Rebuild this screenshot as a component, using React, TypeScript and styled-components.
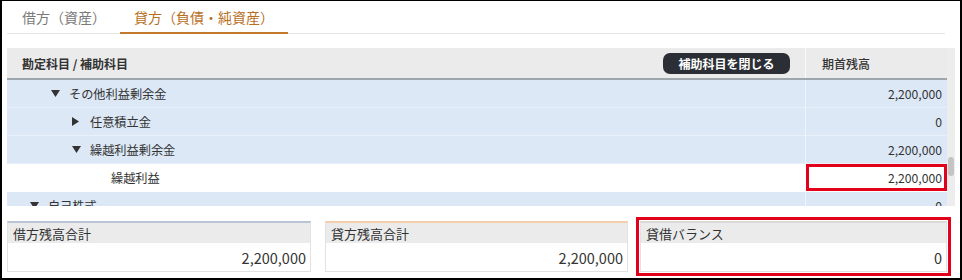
import React from 'react';
import styled, { createGlobalStyle } from 'styled-components';

const GlobalStyle = createGlobalStyle`
  html, body {
    margin: 0;
    padding: 0;
    background: #ffffff;
  }
  body {
    font-family: "Noto Sans CJK JP", "Noto Sans", sans-serif;
    color: #333333;
  }
  * {
    box-sizing: border-box;
  }
`;

interface Row {
  id: number;
  label: string;
  level: number;
  toggle?: 'open' | 'closed';
  value: string;
  selected?: boolean;
  highlight?: boolean;
}

const rows: Row[] = [
  { id: 1, label: 'その他利益剰余金', level: 1, toggle: 'open', value: '2,200,000' },
  { id: 2, label: '任意積立金', level: 2, toggle: 'closed', value: '0' },
  { id: 3, label: '繰越利益剰余金', level: 2, toggle: 'open', value: '2,200,000' },
  { id: 4, label: '繰越利益', level: 3, value: '2,200,000', selected: true, highlight: true },
  { id: 5, label: '自己株式', level: 0, toggle: 'open', value: '0' },
];

const totals = [
  { id: 'debit', label: '借方残高合計', value: '2,200,000', accent: '#b9c4d6', highlight: false },
  { id: 'credit', label: '貸方残高合計', value: '2,200,000', accent: '#f2cfaa', highlight: false },
  { id: 'balance', label: '貸借バランス', value: '0', accent: '#d9d9d9', highlight: true },
];

const Toggle: React.FC<{ dir: 'open' | 'closed' }> = ({ dir }) =>
  dir === 'open' ? (
    <svg width="9" height="7" viewBox="0 0 9 7">
      <path d="M0 0 L9 0 L4.5 7 Z" fill="#333" />
    </svg>
  ) : (
    <svg width="7" height="9" viewBox="0 0 7 9">
      <path d="M0 0 L7 4.5 L0 9 Z" fill="#333" />
    </svg>
  );

const App: React.FC = () => {
  return (
    <>
      <GlobalStyle />
      <Frame>
        <TabBar>
          <Tab active={false}>借方（資産）</Tab>
          <Tab active>貸方（負債・純資産）</Tab>
        </TabBar>

        <TableWrap>
          <Table>
            <HeaderRow>
              <HeaderCell>
                <span>勘定科目 / 補助科目</span>
                <CloseButton>補助科目を閉じる</CloseButton>
              </HeaderCell>
              <HeaderValueCell>期首残高</HeaderValueCell>
            </HeaderRow>
            <Body>
              {rows.map(row => (
                <BodyRow key={row.id} selected={!!row.selected}>
                  <NameCell level={row.level}>
                    <ToggleSlot>{row.toggle && <Toggle dir={row.toggle} />}</ToggleSlot>
                    {row.label}
                  </NameCell>
                  <ValueCell highlight={!!row.highlight}>{row.value}</ValueCell>
                </BodyRow>
              ))}
            </Body>
          </Table>
          <ScrollTrack>
            <ScrollThumb />
          </ScrollTrack>
        </TableWrap>

        <Totals>
          {totals.map(t => (
            <TotalBox key={t.id} accent={t.accent} highlight={t.highlight}>
              <TotalLabel>{t.label}</TotalLabel>
              <TotalValue>{t.value}</TotalValue>
            </TotalBox>
          ))}
        </Totals>
      </Frame>
    </>
  );
};

const Frame = styled.div`
  width: 962px;
  height: 280px;
  border: 2px solid #000;
  border-top-width: 1px;
  padding: 0 5px;
  display: flex;
  flex-direction: column;
  overflow: hidden;
`;

const TabBar = styled.div`
  display: flex;
  height: 33px;
  padding-left: 1px;
  margin-right: 10px;
  border-bottom: 1px solid #e6e6e6;
`;

const Tab = styled.div<{ active: boolean }>`
  display: flex;
  align-items: center;
  padding: 0 14px;
  font-size: 14px;
  margin-bottom: -1px;
  color: ${({ active }) => (active ? '#b8701f' : '#7a7a7a')};
  border-bottom: 2px solid ${({ active }) => (active ? '#c47a2c' : 'transparent')};
`;

const TableWrap = styled.div`
  margin-top: 14px;
  height: 158px;
  display: flex;
`;

const Table = styled.div`
  flex: 1;
  display: flex;
  flex-direction: column;
  min-width: 0;
`;

const HeaderRow = styled.div`
  display: grid;
  grid-template-columns: 1fr 142px;
  height: 32px;
  background: #ebebeb;
  border-bottom: 2px solid #9ea6ae;
  font-size: 12px;
  font-weight: 700;
  color: #333;
`;

const HeaderCell = styled.div`
  display: flex;
  align-items: center;
  justify-content: space-between;
  padding: 0 15px 0 15px;
`;

const HeaderValueCell = styled.div`
  display: flex;
  align-items: center;
  padding-left: 16px;
  border-left: 1px solid #fafafa;
  font-weight: 500;
`;

const CloseButton = styled.div`
  display: flex;
  align-items: center;
  justify-content: center;
  width: 127px;
  height: 21px;
  border-radius: 7px;
  background: #2b2f35;
  color: #ffffff;
  font-size: 12px;
  font-weight: 700;
`;

const Body = styled.div`
  flex: 1;
  overflow: hidden;
`;

const BodyRow = styled.div<{ selected: boolean }>`
  display: grid;
  grid-template-columns: 1fr 142px;
  height: 28px;
  background: ${({ selected }) => (selected ? '#ffffff' : '#dce8f6')};
  border-bottom: 1px solid ${({ selected }) => (selected ? '#ffffff' : '#e9f0f9')};
  font-size: 12.2px;
  color: #333;
`;

const NameCell = styled.div<{ level: number }>`
  display: flex;
  align-items: center;
  padding-left: ${({ level }) => 23 + level * 21}px;
  white-space: nowrap;
`;

const ToggleSlot = styled.span`
  display: inline-flex;
  align-items: center;
  width: 18px;
`;

const ValueCell = styled.div<{ highlight: boolean }>`
  display: flex;
  align-items: center;
  justify-content: flex-end;
  padding-right: 5px;
  border-left: 1px solid rgba(255, 255, 255, 0.55);
  box-shadow: ${({ highlight }) => (highlight ? 'inset 0 0 0 3px #e2001a' : 'none')};
`;

const ScrollTrack = styled.div`
  width: 8px;
  background: #ededed;
  padding-top: 109px;
  display: flex;
  justify-content: center;
`;

const ScrollThumb = styled.div`
  width: 6px;
  height: 19px;
  border-radius: 3px;
  background: #c4c4c4;
`;

const Totals = styled.div`
  margin-top: 15px;
  display: grid;
  grid-template-columns: 304px 303px 305px;
  column-gap: 14px;
  margin-right: 10px;
`;

const TotalBox = styled.div<{ accent: string; highlight: boolean }>`
  height: 51px;
  display: flex;
  flex-direction: column;
  border: 1px solid #e2e2e2;
  border-top: 2px solid ${({ accent }) => accent};
  ${({ highlight }) =>
    highlight
      ? `
    outline: 3px solid #e2001a;
    outline-offset: 1px;
    margin-left: -2px;
  `
      : ''}
`;

const TotalLabel = styled.div`
  height: 20px;
  background: #ebebeb;
  display: flex;
  align-items: center;
  padding-left: 5px;
  font-size: 13px;
  color: #333;
`;

const TotalValue = styled.div`
  flex: 1;
  display: flex;
  align-items: center;
  justify-content: flex-end;
  padding-right: 4px;
  font-size: 14.5px;
  color: #333;
`;

export default App;
